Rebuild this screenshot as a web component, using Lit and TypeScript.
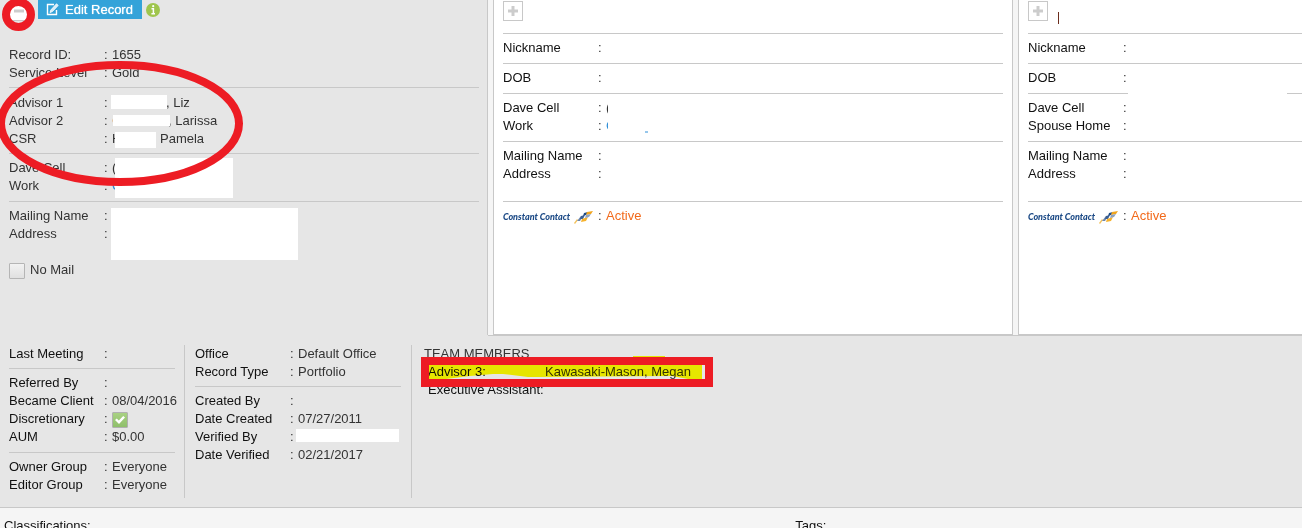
import { LitElement, html, css, svg, nothing, TemplateResult } from "lit";
import { customElement, property } from "lit/decorators.js";

type Cell = string | TemplateResult;
type Row = [Cell, Cell];

@customElement("field-group")
class FieldGroup extends LitElement {
  @property({ attribute: false }) rows: Row[] = [];

  static styles = css`
    :host { display: block; padding: 5px 0 6px; }
    :host([ruled]) { border-top: 1px solid #c8c8c8; }
    :host([first]) { padding: 1px 0 5px; }
    :host([low]) { padding: 6px 0 5px; }
    :host([tall]) { min-height: 48px; }
    dl { margin: 0; }
    .row { display: flex; height: 18px; line-height: 18px; white-space: nowrap; }
    dt { flex: 0 0 95px; color: var(--label, #111); }
    dd { margin: 0; display: flex; flex: 1; min-width: 0; color: #333; }
    .colon { flex: 0 0 8px; }
    .hold { flex: none; }
    .w54 { width: 54px; }
    .w56 { width: 56px; }
    .w48 { width: 48px; }
    .amber { color: #d98a2b; }
    .blue { color: #2f8fd8; }
    .active { color: #f26a1b; }
    .brand { display: flex; align-items: center; gap: 4px; height: 20px; color: #1c4a86;
      font: italic 900 9px/20px Lato, "Open Sans", sans-serif; }
    .brand svg { flex: none; width: 19px; height: 13px; }
    input { appearance: none; box-sizing: border-box; width: 16px; height: 16px; margin: 2px 0 0;
      border: 1px solid #b0b0b0; border-radius: 1px; background: linear-gradient(#a9d183, #8fbf6b); }
    input::after { content: ""; display: block; width: 10px; height: 8px; margin: 3px 2px; background: #fff;
      clip-path: polygon(0 50%, 18% 32%, 38% 55%, 82% 0, 100% 18%, 40% 100%); }
  `;

  render() {
    return html`<dl>${this.rows.map(
      ([label, value]) => html`<div class="row"><dt>${label}</dt><dd><span class="colon">:</span>${value}</dd></div>`
    )}</dl>`;
  }
}

const brand = html`<span class="brand">Constant Contact
  <svg viewBox="0 0 19 13" aria-hidden="true">
    <path d="M0 12 L3 8 L4 9 L1 13 Z" fill="#f3c25c"/>
    <path d="M3 10 L7 5 L9 5 L6 10 Z" fill="#6c86ad"/>
    <path d="M7 5 L11 4 L9 8 L6 8 Z" fill="#3b5f93"/>
    <path d="M8 8 L14 6 L12 10 L7 11 Z" fill="#f6b22c"/>
    <path d="M10 2 L14 1 L12 4 L9 5 Z" fill="#1c4a86"/>
    <path d="M13 1 L19 0 L17 3 L12 4 Z" fill="#f0a51f"/>
    <path d="M12 4 L17 3 L15 6 L11 7 Z" fill="#8ea2c0"/>
  </svg></span>`;

@customElement("app-root")
class AppRoot extends LitElement {
  static styles = css`
    :host { display: block; position: relative; height: 100vh; overflow: hidden; background: #f5f5f5;
      font: 13px/18px "Liberation Sans", Arial, sans-serif; color: #111; }
    .top { display: grid; gap: 5px;
      grid-template-columns: minmax(0, 488fr) minmax(0, 520fr) minmax(0, 284fr); }
    .panel { box-sizing: border-box; min-height: 335px; padding: 0 8px 0 9px; background: #e6e6e6;
      border-right: 1px solid #c8c8c8; --label: #333; }
    .card { box-sizing: border-box; padding: 0 9px; background: #fff; border: 1px solid #c8c8c8; border-top: 0; }
    .card.last { padding-right: 0; border-right: 0; }
    .tools { display: flex; align-items: flex-start; height: 45px; }
    .cardtools { display: flex; gap: 10px; height: 33px; }
    .toggle { box-sizing: border-box; flex: none; width: 20px; height: 20px; margin: 1px 0 0; padding: 3px; border: 1px solid #c8c8c8;
      background: #fff; }
    .toggle svg { display: block; width: 12px; height: 12px; }
    .toggle.round { margin-right: 9px; }
    .edit { display: flex; gap: 6px; align-items: center; box-sizing: border-box; height: 19px; padding: 0 9px 0 8px; border: 0; background: #34a3d9;
      color: #fff; font: inherit; text-shadow: 0 0 1px #fff; white-space: nowrap; }
    .info { width: 14px; height: 14px; margin: 3px 0 0 4px; }
    .caret { width: 1px; height: 12px; margin-top: 12px; background: #6b2d1d; }
    .nomail { display: flex; gap: 5px; align-items: center; margin-top: 12px; color: #333; }
    .nomail input { appearance: none; box-sizing: border-box; width: 16px; height: 16px; margin: 2px 0 0;
      border: 1px solid #b5b5b5; border-radius: 1px; background: linear-gradient(#f2f2f2, #e0e0e0); }
    .details { display: flex; background: #e6e6e6; border-bottom: 1px solid #c8c8c8; padding: 9px 0 9px 9px; position: relative; }
    .details::before { content: ""; position: absolute; top: 0; left: 488px; right: 0; height: 1px; background: #c8c8c8; }
    .col { border-right: 1px solid #c8c8c8; padding-right: 9px; margin-right: 10px; width: 166px; height: 153px; margin-top: 1px; }
    .col > :first-child { margin-top: -1px; }
    .col.wide { width: 206px; padding-right: 10px; margin-right: 12px; }
    .team { color: #333; padding-top: 1px; }
    .team .title { margin: 0; font: inherit; }
    .member { display: flex; padding-left: 4px; white-space: nowrap; color: #111; }
    .member .role { width: 117px; }
    .member .name { color: #333; }
    .foot { display: flex; gap: 2px; padding: 9px 4px; }
    .foot span { flex: 0 0 61%; }
    .marks { position: absolute; left: 0; top: 0; width: 1302px; height: 528px; pointer-events: none; }
    .marker { mix-blend-mode: multiply; }
  `;

  private toggle(plus: boolean) {
    return html`<button class="toggle ${plus ? "" : "round"}" aria-label=${plus ? "Expand" : "Collapse"}>
      <svg viewBox="0 0 12 12"><path d="M1 6H11" stroke="#ccc" stroke-width="3"/>
      ${plus ? svg`<path d="M6 1V11" stroke="#ccc" stroke-width="3"/>` : nothing}</svg></button>`;
  }

  private card(last: boolean) {
    const v = (a: Cell) => (last ? "" : a);
    return html`<section class="card ${last ? "last" : ""}">
      <div class="cardtools">${this.toggle(true)}${last ? html`<i class="caret"></i>` : nothing}</div>
      <field-group ruled .rows=${[["Nickname", ""]]}></field-group>
      <field-group ruled .rows=${[["DOB", ""]]}></field-group>
      <field-group ruled .rows=${[
        ["Dave Cell", v("(")],
        [last ? "Spouse Home" : "Work", v(html`<span class="blue">C</span>`)],
      ]}></field-group>
      <field-group ruled tall .rows=${[["Mailing Name", ""], ["Address", ""]]}></field-group>
      <field-group ruled .rows=${[[brand, html`<span class="active">Active</span>`]]}></field-group>
    </section>`;
  }

  render() {
    return html`
      <div class="top">
        <section class="panel">
          <div class="tools">
            ${this.toggle(false)}
            <button class="edit">
              <svg width="13" height="13" viewBox="0 0 13 13" fill="none" stroke="#fff">
                <path d="M8 1.5H1.5V11.5H10.5V7" stroke-width="1.4"/>
                <path d="M4 9.5L4.8 7L10.5 0.8L12.2 2.4L6.4 8.6Z" fill="#d8eef9" stroke-width=".8"/>
              </svg>Edit Record</button>
            <svg class="info" viewBox="0 0 14 14"><circle cx="7" cy="7" r="7" fill="#9fc54d"/>
              <path d="M5.5 5.8H7.4V10.6M5.4 10.8H9" stroke="#fff" stroke-width="1.5" fill="none"/><circle cx="7.2" cy="3.2" r="1.1" fill="#fff"/></svg>
          </div>
          <field-group first .rows=${[["Record ID:", "1655"], ["Service Level", "Gold"]]}></field-group>
          <field-group ruled low .rows=${[
            ["Advisor 1", html`<span class="hold w54"></span>, Liz`],
            ["Advisor 2", html`<span class="hold w56 amber">C</span>, Larissa`],
            ["CSR", html`<span class="hold w48">H</span>Pamela`],
          ]}></field-group>
          <field-group ruled .rows=${[["Dave Cell", "("], ["Work", html`<span class="blue">C</span>`]]}></field-group>
          <field-group ruled .rows=${[["Mailing Name", ""], ["Address", ""]]}></field-group>
          <label class="nomail"><input type="checkbox" />No Mail</label>
        </section>
        ${this.card(false)}${this.card(true)}
      </div>
      <div class="details">
        <div class="col">
          <field-group first .rows=${[["Last Meeting", ""]]}></field-group>
          <field-group ruled .rows=${[
            ["Referred By", ""],
            ["Became Client", "08/04/2016"],
            ["Discretionary", html`<input type="checkbox" checked aria-label="Discretionary" />`],
            ["AUM", "$0.00"],
          ]}></field-group>
          <field-group ruled .rows=${[["Owner Group", "Everyone"], ["Editor Group", "Everyone"]]}></field-group>
        </div>
        <div class="col wide">
          <field-group first .rows=${[["Office", "Default Office"], ["Record Type", "Portfolio"]]}></field-group>
          <field-group ruled .rows=${[
            ["Created By", ""],
            ["Date Created", "07/27/2011"],
            ["Verified By", ""],
            ["Date Verified", "02/21/2017"],
          ]}></field-group>
        </div>
        <div class="team">
          <h2 class="title">TEAM MEMBERS</h2>
          <div class="member"><span class="role">Advisor 3:</span><span class="name">Kawasaki-Mason, Megan</span></div>
          <div class="member">Executive Assistant:</div>
        </div>
      </div>
      <div class="foot"><span>Classifications:</span>Tags:</div>

      <svg class="marks marker" viewBox="0 0 1302 528" aria-hidden="true">
        <path d="M429 365H702V379H688L672 376L540 377L528 377L503 374L493 374L470 376L446 379H429Z" fill="#ffff00"/>
        <path d="M633 356H665V358H633Z" fill="#ffff00"/>
      </svg>
      <svg class="marks" viewBox="0 0 1302 528" aria-hidden="true">
        <g fill="#fff">
          <rect x="111" y="95" width="56" height="14"/>
          <rect x="113" y="115" width="57" height="11"/>
          <rect x="115" y="132" width="41" height="16"/>
          <rect x="115" y="158" width="118" height="40"/>
          <rect x="111" y="208" width="187" height="52"/>
          <rect x="608" y="96" width="60" height="40"/>
          <rect x="1128" y="88" width="159" height="40"/>
          <rect x="296" y="429" width="103" height="13"/>
        </g>
        <path d="M645 132H648" stroke="#2f8fd8"/>
        <g fill="none" stroke="#ed1c24" stroke-width="8">
          <circle cx="18.5" cy="14.5" r="12.5"/>
          <ellipse cx="120" cy="123.5" rx="119" ry="58.5"/>
          <rect x="425" y="361" width="284" height="22"/>
        </g>
      </svg>`;
  }
}
